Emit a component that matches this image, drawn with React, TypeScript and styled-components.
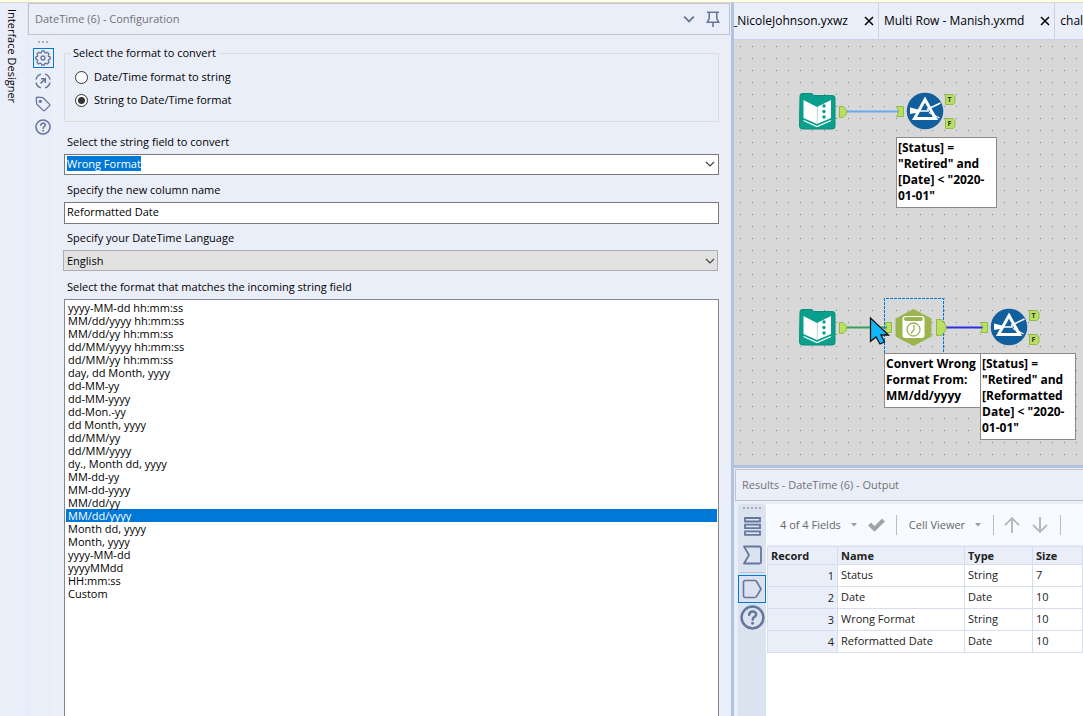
import React, { useEffect, useRef } from "react";
import styled, { createGlobalStyle } from "styled-components";

const GlobalStyle = createGlobalStyle`
  * { box-sizing: border-box; }
  html, body, #root { height: 100%; }
  body {
    margin: 0;
    overflow: hidden;
    background: #eaeef9;
    color: #000;
    font-family: "Open Sans", "Noto Sans", sans-serif;
    font-size: 11px;
    line-height: 16px;
  }
  button, input, select { font: inherit; color: inherit; margin: 0; }
  button { padding: 0; border: 0; background: none; }
`;

const Page = styled.div`
  display: flex;
  height: 100vh;
  border-top: 2px solid #fffee0;
`;

const SideTab = styled.aside`
  flex: none;
  width: 28px;
  padding: 6px 7px 0 0;
  border-top: 1px solid #d9d9d9;
  border-right: 1px solid #e2e6f2;
  writing-mode: vertical-rl;
`;

const ConfigPanel = styled.section`
  flex: 702 1 0;
  min-width: 0;
  display: flex;
  flex-direction: column;
  padding-right: 1px;
  border-top: 1px solid #d9d9d9;
`;

const TitleBar = styled.header`
  flex: none;
  display: flex;
  align-items: center;
  height: 32px;
  padding: 0 9px 0 6px;
  border: 1px solid #c3c3c3;
  color: #737373;
`;

const PanelTitle = styled.h1`
  flex: 1;
  margin: 0;
  font-size: 11px;
  font-weight: 400;
`;

const TitleActions = styled.div`
  display: flex;
  align-items: center;
  gap: 11px;
`;

const IconButton = styled.button`
  display: flex;
  align-items: center;
  justify-content: center;
`;

const ConfigBody = styled.div`
  flex: 1;
  min-height: 0;
  display: flex;
  padding: 3px 11px 0 4px;
`;

const ToolStrip = styled.nav`
  flex: none;
  width: 23px;
  display: flex;
  flex-direction: column;
  align-items: center;
  gap: 3px;
  border-right: 1px solid #f1f4fb;
`;

const Grip = styled.div<{ $wide?: boolean }>`
  height: 4px;
  width: ${(p) => (p.$wide ? 18 : 10)}px;
  margin: 3px 0 ${(p) => (p.$wide ? 6 : 0)}px;
  background: repeating-linear-gradient(90deg, #a9adb8 0 2px, transparent 2px 4px) 0 0 / 100% 2px no-repeat;
`;

const ToolButton = styled(IconButton)<{ $active?: boolean }>`
  width: 21px;
  height: 20px;
  border: 1px solid ${(p) => (p.$active ? "#0078d7" : "transparent")};
`;

const Form = styled.form`
  flex: 1;
  min-width: 0;
  display: flex;
  flex-direction: column;
  padding: 7px 0 0 9px;
`;

const Group = styled.fieldset`
  margin: 0 0 12px;
  padding: 8px 10px 13px;
  border: 1px solid #dcdcdc;
  display: flex;
  flex-direction: column;
  gap: 7px;
  legend { margin-left: -5px; padding: 0 3px; }
`;

const RadioLabel = styled.label`
  display: flex;
  align-items: center;
  gap: 6px;
  height: 16px;
`;

const Radio = styled.input`
  appearance: none;
  width: 13px;
  height: 13px;
  border: 1px solid #333;
  border-radius: 50%;
  background: #fff;
  &:checked { background: radial-gradient(circle, #333 0 3px, #fff 4px); }
`;

const FieldLabel = styled.label`
  flex: none;
  height: 16px;
  margin: 0 0 4px 3px;
`;

const Combo = styled.div`
  flex: none;
  display: flex;
  align-items: center;
  height: 21px;
  margin-bottom: 7px;
  padding: 0 3px 2px 2px;
  border: 1px solid #7a7a7a;
  background: #fff;
`;

const ComboInput = styled.input`
  flex: 1;
  min-width: 0;
  height: 15px;
  line-height: 15px;
  padding: 0;
  border: 0;
  outline: 0;
  background: none;
  &::selection { background: #0078d7; color: #fff; }
`;

const TextInput = styled.input`
  flex: none;
  height: 22px;
  margin-bottom: 6px;
  padding: 0 2px 3px;
  border: 1px solid #7a7a7a;
  outline: 0;
  background: #fff;
`;

const SelectFrame = styled.div`
  flex: none;
  display: grid;
  margin: 0 1px 8px -1px;
  select, svg { grid-area: 1 / 1; }
  svg { justify-self: end; align-self: center; margin-right: 3px; pointer-events: none; }
`;

const DropDown = styled.select`
  appearance: none;
  height: 21px;
  padding: 0 3px;
  border: 1px solid #adadad;
  border-radius: 0;
  background: #e1e1e1;
`;

const FormatList = styled.select`
  flex: 1;
  min-height: 0;
  padding: 1px 0 0;
  border: 1px solid #828790;
  border-bottom: 0;
  border-radius: 0;
  outline: 0;
  background: #fff;
  overflow: hidden;
  option {
    display: flex;
    align-items: center;
    min-height: 13px;
    height: 13px;
    margin: 0 1px;
    padding: 0 2px;
    overflow: visible;
  }
  option:checked {
    background: linear-gradient(#0078d7, #0078d7);
    -webkit-text-fill-color: #fff;
  }
`;

const Workspace = styled.main`
  flex: 349 1 0;
  min-width: 0;
  display: flex;
  flex-direction: column;
  border-top: 1px solid #d9d9d9;
  border-left: 3px solid #b0c1e2;
`;

const TabBar = styled.div`
  flex: none;
  display: flex;
  height: 37px;
  overflow: hidden;
  border-bottom: 1px solid #c6d2ea;
  white-space: nowrap;
  font-size: 12px;
`;

const Tab = styled.div<{ $scrolled?: boolean }>`
  flex: none;
  display: flex;
  align-items: center;
  gap: 16px;
  margin-left: ${(p) => (p.$scrolled ? -2 : 0)}px;
  padding: 0 4px 0 ${(p) => (p.$scrolled ? 0 : 5)}px;
  border-right: 1px solid #c6d2ea;
  &:last-child { padding-right: 0; border-right: 0; }
`;

const Canvas = styled.div`
  flex: 425 1 0;
  min-height: 0;
  position: relative;
  overflow: hidden;
  background:
    linear-gradient(90deg, #d8d8d8 6px, transparent 6px 7px, #d8d8d8 7px) 0 0 / 12px 12px,
    linear-gradient(#d8d8d8 6px, #858585 6px 7px, #d8d8d8 7px) 0 0 / 12px 12px;
`;

const Diagram = styled.svg`
  position: absolute;
  left: 0;
  top: 0;
`;

const Annotation = styled.div<{ $x: number; $y: number; $w: number }>`
  position: absolute;
  left: ${(p) => p.$x}px;
  top: ${(p) => p.$y}px;
  width: ${(p) => p.$w}px;
  padding: 2px 1px 3px;
  border: 1px solid #8a8a8a;
  background: #fff;
  font-size: 12px;
  font-weight: 700;
  line-height: 16px;
`;

const Results = styled.section`
  flex: 247 1 0;
  min-height: 0;
  display: flex;
  flex-direction: column;
  padding: 1px 0 0 1px;
  border-top: 3px solid #b0c1e2;
`;

const ResultsTitle = styled(TitleBar)`
  border-right: 0;
`;

const ResultsBody = styled.div`
  flex: 1;
  min-height: 0;
  display: flex;
  padding: 3px 0 0 3px;
`;

const ResultsStrip = styled.nav`
  flex: none;
  width: 28px;
  display: flex;
  flex-direction: column;
  align-items: center;
  border-radius: 4px 4px 0 0;
  background: #dbe2f0;
`;

const StripButton = styled(IconButton)<{ $active?: boolean }>`
  width: 28px;
  height: 28px;
  border: 1px solid ${(p) => (p.$active ? "#0078d7" : "transparent")};
`;

const MessagesButton = styled(IconButton)`
  margin-bottom: 5px;
`;

const StripRule = styled.hr`
  width: 24px;
  margin: 3px 0 2px;
  border: 0;
  border-top: 1px solid #bcc3cf;
`;

const ResultsContent = styled.div`
  flex: 1;
  min-width: 0;
  padding-left: 1px;
  background: #fff;
  overflow: hidden;
`;

const Toolbar = styled.div`
  display: flex;
  align-items: center;
  height: 42px;
  padding-left: 13px;
  background: #f7faff;
  border-bottom: 1px solid #eaf0fa;
  color: #666;
  white-space: nowrap;
`;

const MenuButton = styled.button`
  display: flex;
  align-items: center;
  gap: 10px;
`;

const Separator = styled.span<{ $left: number; $right: number }>`
  width: 1px;
  height: 20px;
  margin: 0 ${(p) => p.$right}px 0 ${(p) => p.$left}px;
  background: #bdbdbd;
`;

const ArrowGroup = styled.div`
  display: flex;
  gap: 12px;
`;

const CheckButton = styled(IconButton)`
  margin-left: 11px;
`;

const Table = styled.table`
  width: 100%;
  table-layout: fixed;
  border-collapse: collapse;
  color: #222;
  th, td {
    height: 22px;
    padding: 0 3px 2px;
    border: 1px solid #d5ddee;
    text-align: left;
    font-weight: 400;
    white-space: nowrap;
  }
  thead th { height: 18px; padding-bottom: 0; font-weight: 700; background: #eaeef9; }
  tbody th { text-align: right; padding: 0 3px; background: #eaeef9; }
`;

const Col = styled.col<{ $w?: number }>`
  width: ${(p) => (p.$w ? `${p.$w}px` : "auto")};
`;

const formats = [
  "yyyy-MM-dd hh:mm:ss", "MM/dd/yyyy hh:mm:ss", "MM/dd/yy hh:mm:ss", "dd/MM/yyyy hh:mm:ss",
  "dd/MM/yy hh:mm:ss", "day, dd Month, yyyy", "dd-MM-yy", "dd-MM-yyyy", "dd-Mon.-yy",
  "dd Month, yyyy", "dd/MM/yy", "dd/MM/yyyy", "dy., Month dd, yyyy", "MM-dd-yy", "MM-dd-yyyy",
  "MM/dd/yy", "MM/dd/yyyy", "Month dd, yyyy", "Month, yyyy", "yyyy-MM-dd", "yyyyMMdd",
  "HH:mm:ss", "Custom",
];

const fields = [
  ["Status", "String", "7"],
  ["Date", "Date", "10"],
  ["Wrong Format", "String", "10"],
  ["Reformatted Date", "Date", "10"],
];

const SLATE = "#66779a";

const Chevron = ({ color = "#444", size = 10 }: { color?: string; size?: number }) => (
  <svg width={size} height={size} viewBox="0 0 10 10" fill="none" stroke={color} strokeWidth={size > 10 ? 1.5 : 1.2}>
    <path d="M1 3l4 4 4-4" />
  </svg>
);

const Caret = () => (
  <svg width="6" height="4" viewBox="0 0 6 4"><path d="M0 0h6L3 3.5z" fill="#999" /></svg>
);

const PinIcon = () => (
  <svg width="14" height="17" viewBox="0 0 14 17" fill="none" stroke={SLATE} strokeWidth="1.6">
    <path d="M1 1.3h12M3.2 1.3v6.2L1.3 11.3h11.4L10.8 7.5V1.3M7 11.3V16" />
  </svg>
);

const GearIcon = () => (
  <svg width="16" height="16" viewBox="0 0 16 16" fill="none" stroke={SLATE} strokeWidth="1.3" strokeLinejoin="round">
    <path d="M6.7 1h2.6l.5 1.7 1 .4 1.6-.9 1.7 1.7-.9 1.6.4 1 1.6.4v2.3l-1.6.5-.4 1 .9 1.6-1.7 1.7-1.6-.9-1 .4L9.3 15H6.7l-.5-1.5-1-.4-1.6.9-1.7-1.7.9-1.6-.4-1L.8 9.2V6.9l1.6-.4.4-1-.9-1.6 1.7-1.7 1.6.9 1-.4z" />
    <circle cx="8" cy="8" r="2" />
  </svg>
);

const TargetIcon = () => (
  <svg width="16" height="16" viewBox="0 0 16 16" fill="none" stroke={SLATE} strokeWidth="1.4">
    <path d="M1 6.5A7.2 7.2 0 0 1 6 1.1M10 1.1a7.2 7.2 0 0 1 5 5.4M15 9.5a7.2 7.2 0 0 1-5 5.4M6 14.9a7.2 7.2 0 0 1-5-5.4" />
    <path d="M5.5 10.5L10 6M6 5.7h4.3v4.3" strokeWidth="1.6" />
  </svg>
);

const TagIcon = () => (
  <svg width="16" height="16" viewBox="0 0 16 16" fill="none" stroke={SLATE} strokeWidth="1.3" strokeLinejoin="round">
    <path d="M1.2 2.2Q1.2 1.2 2.2 1.2L8 1.7l6.6 6.7q.6.6 0 1.2l-5 5q-.6.6-1.2 0L1.7 8z" />
    <circle cx="5.3" cy="5.3" r="1" fill={SLATE} />
  </svg>
);

const HelpIcon = ({ size }: { size: number }) => (
  <svg width={size} height={size} viewBox="0 0 24 24" fill="none" stroke={SLATE} strokeWidth="2.4" strokeLinecap="round">
    <circle cx="12" cy="12" r="10.5" />
    <path d="M8.8 9.3c.2-4 6.7-4 6.7-.3 0 2.3-3.3 2.3-3.3 5" />
    <path d="M12.1 17.5v.1" strokeWidth="2.8" />
  </svg>
);

const ListIcon = () => (
  <svg width="17" height="19" viewBox="0 0 17 19" fill="none" stroke={SLATE} strokeWidth="1.8">
    <path d="M1 1h15v3.5H1zM1 7.7h15v3.5H1zM1 14.4h15v3.5H1z" />
  </svg>
);

const SigmaTagIcon = () => (
  <svg width="20" height="20" viewBox="0 0 20 20" fill="none" stroke={SLATE} strokeWidth="1.8" strokeLinejoin="round">
    <path d="M2 1.5h15q2 0 2 2V17q0 1.5-2 1.5H2L7 10z" />
  </svg>
);

const OutputTagIcon = () => (
  <svg width="20" height="20" viewBox="0 0 20 20" fill="none" stroke={SLATE} strokeWidth="1.6" strokeLinejoin="round">
    <path d="M3.5 1.5h9.5q1 0 1.5 1L19 10l-4.5 7.5q-.5 1-1.5 1H3.5q-2 0-2-2v-13q0-2 2-2z" />
  </svg>
);

const ArrowIcon = ({ down }: { down?: boolean }) => (
  <svg width="16" height="16" viewBox="0 0 16 16" fill="none" stroke="#b3b3b3" strokeWidth="1.8">
    <path d={down ? "M8 0v14.5M1 7.8l7 7 7-7" : "M8 16V1.5M1 8.2l7-7 7 7"} />
  </svg>
);

const CloseIcon = () => (
  <svg width="10" height="10" viewBox="0 0 10 10" stroke="#000" strokeWidth="1.5"><path d="M1 1l8 8M9 1l-8 8" /></svg>
);

const Book = ({ x, y }: { x: number; y: number }) => (
  <g transform={`translate(${x} ${y})`}>
    <path d="M1 3Q1 .5 3 .5h10l2 2h18.5Q36 2.5 36 5v28.5Q36 36 33.5 36h-30Q.5 36 .5 33z" fill="#0a9e8c" stroke="#078f7e" />
    <path d="M4.5 7L18 14v17L4.500 25zM32 7l-14 7v17l14-6z" fill="#fff" />
    <path d="M18.300 14v17" stroke="#b5ddd7" />
    <circle cx="25" cy="13" r="1.7" fill="#0a9e8c" />
    <circle cx="25" cy="18.5" r="1.7" fill="#0a9e8c" />
    <circle cx="25" cy="24" r="1.7" fill="#0a9e8c" />
    <path d="M4.500 27.500l13.500 6L32 27.500" fill="none" stroke="#fff" strokeWidth="1.2" />
  </g>
);

const OutAnchor = ({ x, y, letter }: { x: number; y: number; letter?: string }) => (
  <g transform={`translate(${x} ${y})`}>
    <path d={letter ? "M.5.5H8l2 2.5v5L8 10.5H.5z" : "M.5.5H4L7.5 4v4L4 11.5H.5z"} fill="#b9e060" stroke="#8fba4a" />
    {letter && <text x="2.5" y="8" fontSize="7" fontWeight="700" fill="#333">{letter}</text>}
  </g>
);

const InAnchor = ({ x, y }: { x: number; y: number }) => (
  <path transform={`translate(${x} ${y})`} d="M.5.5h7v10h-7L3 5.5z" fill="#b9e060" stroke="#8fba4a" />
);

const Filter = ({ x, y }: { x: number; y: number }) => (
  <g transform={`translate(${x} ${y})`}>
    <circle r="18.3" fill="#125f9e" />
    <path d="M-15-3.5L-7-1.5v3L-15 3z" fill="#fff" />
    <path d="M-8 0H4M2-1.5L15.5-8M4 1.5L14.5 7" stroke="#fff" strokeWidth="1.4" />
    <path d="M0-11.5L10.5 7.5h-21z" fill="none" stroke="#fff" strokeWidth="3" />
    <OutAnchor x={20} y={-17} letter="T" />
    <OutAnchor x={20} y={7} letter="F" />
  </g>
);

const Workflow = () => (
  <Diagram width="349" height="425">
    <path d="M112 71.5h54" stroke="#6aa9ea" strokeWidth="1.8" />
    <path d="M112 287.5h44" stroke="#35a05a" strokeWidth="1.8" />
    <path d="M212 287.5h39" stroke="#2d2de6" strokeWidth="1.8" />
    <Book x={65} y={53} />
    <OutAnchor x={105} y={66} />
    <InAnchor x={162} y={66} />
    <Filter x={191} y={71} />
    <Book x={65} y={269} />
    <OutAnchor x={105} y={282} />
    <InAnchor x={150} y={282} />
    <path d="M150.5 313v-54.5h59V313" fill="none" stroke="#0078d7" strokeDasharray="3 1" />
    <path d="M179.5 269l18 9.5v18l-18 9.5-18-9.5v-18z" fill="#9ab54e" />
    <rect x="168.5" y="276" width="22" height="22" rx="3" fill="#fff" />
    <rect x="170" y="277" width="19" height="4" rx="2" fill="#9ab54e" />
    <circle cx="179.5" cy="289.5" r="6.5" fill="#fff" stroke="#9ab54e" strokeWidth="1.3" />
    <path d="M180 285v4.5l-3 4" fill="none" stroke="#9ab54e" strokeWidth="1.3" />
    <path d="M202.5 279.5h5l4.5 6v4l-4.5 6h-5z" fill="#b9e060" stroke="#8fba4a" />
    <InAnchor x={246} y={282} />
    <Filter x={275} y={287} />
    <path d="M136.5 278v23.500l5.500-4.500 4 7 4.500-2-3.500-7h7.500z" fill="#0fb8fb" stroke="#111" strokeWidth="1.3" />
  </Diagram>
);

export default function App() {
  const fieldRef = useRef<HTMLInputElement>(null);
  useEffect(() => {
    fieldRef.current?.focus();
    fieldRef.current?.select();
  }, []);

  return (
    <>
      <GlobalStyle />
      <Page>
        <SideTab>Interface Designer</SideTab>
        <ConfigPanel>
          <TitleBar>
            <PanelTitle>DateTime (6) - Configuration</PanelTitle>
            <TitleActions>
              <IconButton aria-label="Panel menu"><Chevron color={SLATE} size={12} /></IconButton>
              <IconButton aria-label="Pin panel"><PinIcon /></IconButton>
            </TitleActions>
          </TitleBar>
          <ConfigBody>
            <ToolStrip>
              <Grip />
              <ToolButton $active aria-label="Configuration"><GearIcon /></ToolButton>
              <ToolButton aria-label="Navigation"><TargetIcon /></ToolButton>
              <ToolButton aria-label="Annotation"><TagIcon /></ToolButton>
              <ToolButton aria-label="Help"><HelpIcon size={16} /></ToolButton>
            </ToolStrip>
            <Form>
              <Group>
                <legend>Select the format to convert</legend>
                <RadioLabel><Radio type="radio" name="mode" />Date/Time format to string</RadioLabel>
                <RadioLabel><Radio type="radio" name="mode" defaultChecked />String to Date/Time format</RadioLabel>
              </Group>
              <FieldLabel htmlFor="field">Select the string field to convert</FieldLabel>
              <Combo>
                <ComboInput id="field" ref={fieldRef} role="combobox" aria-expanded={false} defaultValue="Wrong Format" />
                <IconButton type="button" aria-label="Show fields"><Chevron /></IconButton>
              </Combo>
              <FieldLabel htmlFor="column">Specify the new column name</FieldLabel>
              <TextInput id="column" defaultValue="Reformatted Date" />
              <FieldLabel htmlFor="language">Specify your DateTime Language</FieldLabel>
              <SelectFrame>
                <DropDown id="language"><option>English</option></DropDown>
                <Chevron />
              </SelectFrame>
              <FieldLabel htmlFor="format">Select the format that matches the incoming string field</FieldLabel>
              <FormatList id="format" size={32} defaultValue="MM/dd/yyyy">
                {formats.map((f) => <option key={f}>{f}</option>)}
              </FormatList>
            </Form>
          </ConfigBody>
        </ConfigPanel>
        <Workspace>
          <TabBar>
            <Tab $scrolled>_NicoleJohnson.yxwz<IconButton aria-label="Close tab"><CloseIcon /></IconButton></Tab>
            <Tab>Multi Row - Manish.yxmd<IconButton aria-label="Close tab"><CloseIcon /></IconButton></Tab>
            <Tab>chal</Tab>
          </TabBar>
          <Canvas>
            <Annotation $x={162} $y={97} $w={101}>[Status] = "Retired" and [Date] &lt; "2020-01-01"</Annotation>
            <Workflow />
            <Annotation $x={150} $y={313} $w={98}>Convert Wrong Format From: MM/dd/yyyy</Annotation>
            <Annotation $x={246} $y={313} $w={96}>[Status] = "Retired" and [Reformatted Date] &lt; "2020-01-01"</Annotation>
          </Canvas>
          <Results>
            <ResultsTitle><PanelTitle as="h2">Results - DateTime (6) - Output</PanelTitle></ResultsTitle>
            <ResultsBody>
              <ResultsStrip>
                <Grip $wide />
                <MessagesButton aria-label="Messages"><ListIcon /></MessagesButton>
                <StripButton aria-label="Input data"><SigmaTagIcon /></StripButton>
                <StripRule />
                <StripButton $active aria-label="Output data"><OutputTagIcon /></StripButton>
                <StripButton aria-label="Help"><HelpIcon size={25} /></StripButton>
              </ResultsStrip>
              <ResultsContent>
                <Toolbar>
                  <MenuButton>4 of 4 Fields<Caret /></MenuButton>
                  <CheckButton aria-label="Apply">
                    <svg width="17" height="14" viewBox="0 0 17 14" fill="none" stroke="#a3a3a3" strokeWidth="4"><path d="M1.5 6l5 5L15.5 2" /></svg>
                  </CheckButton>
                  <Separator $left={11} $right={12} />
                  <MenuButton>Cell Viewer<Caret /></MenuButton>
                  <Separator $left={12} $right={10} />
                  <ArrowGroup>
                    <IconButton aria-label="Previous"><ArrowIcon /></IconButton>
                    <IconButton aria-label="Next"><ArrowIcon down /></IconButton>
                  </ArrowGroup>
                  <Separator $left={12} $right={0} />
                </Toolbar>
                <Table>
                  <colgroup><Col $w={70} /><Col $w={127} /><Col $w={68} /><Col /></colgroup>
                  <thead>
                    <tr><th>Record</th><th>Name</th><th>Type</th><th>Size</th></tr>
                  </thead>
                  <tbody>
                    {fields.map(([name, type, size], i) => (
                      <tr key={name}><th scope="row">{i + 1}</th><td>{name}</td><td>{type}</td><td>{size}</td></tr>
                    ))}
                  </tbody>
                </Table>
              </ResultsContent>
            </ResultsBody>
          </Results>
        </Workspace>
      </Page>
    </>
  );
}
